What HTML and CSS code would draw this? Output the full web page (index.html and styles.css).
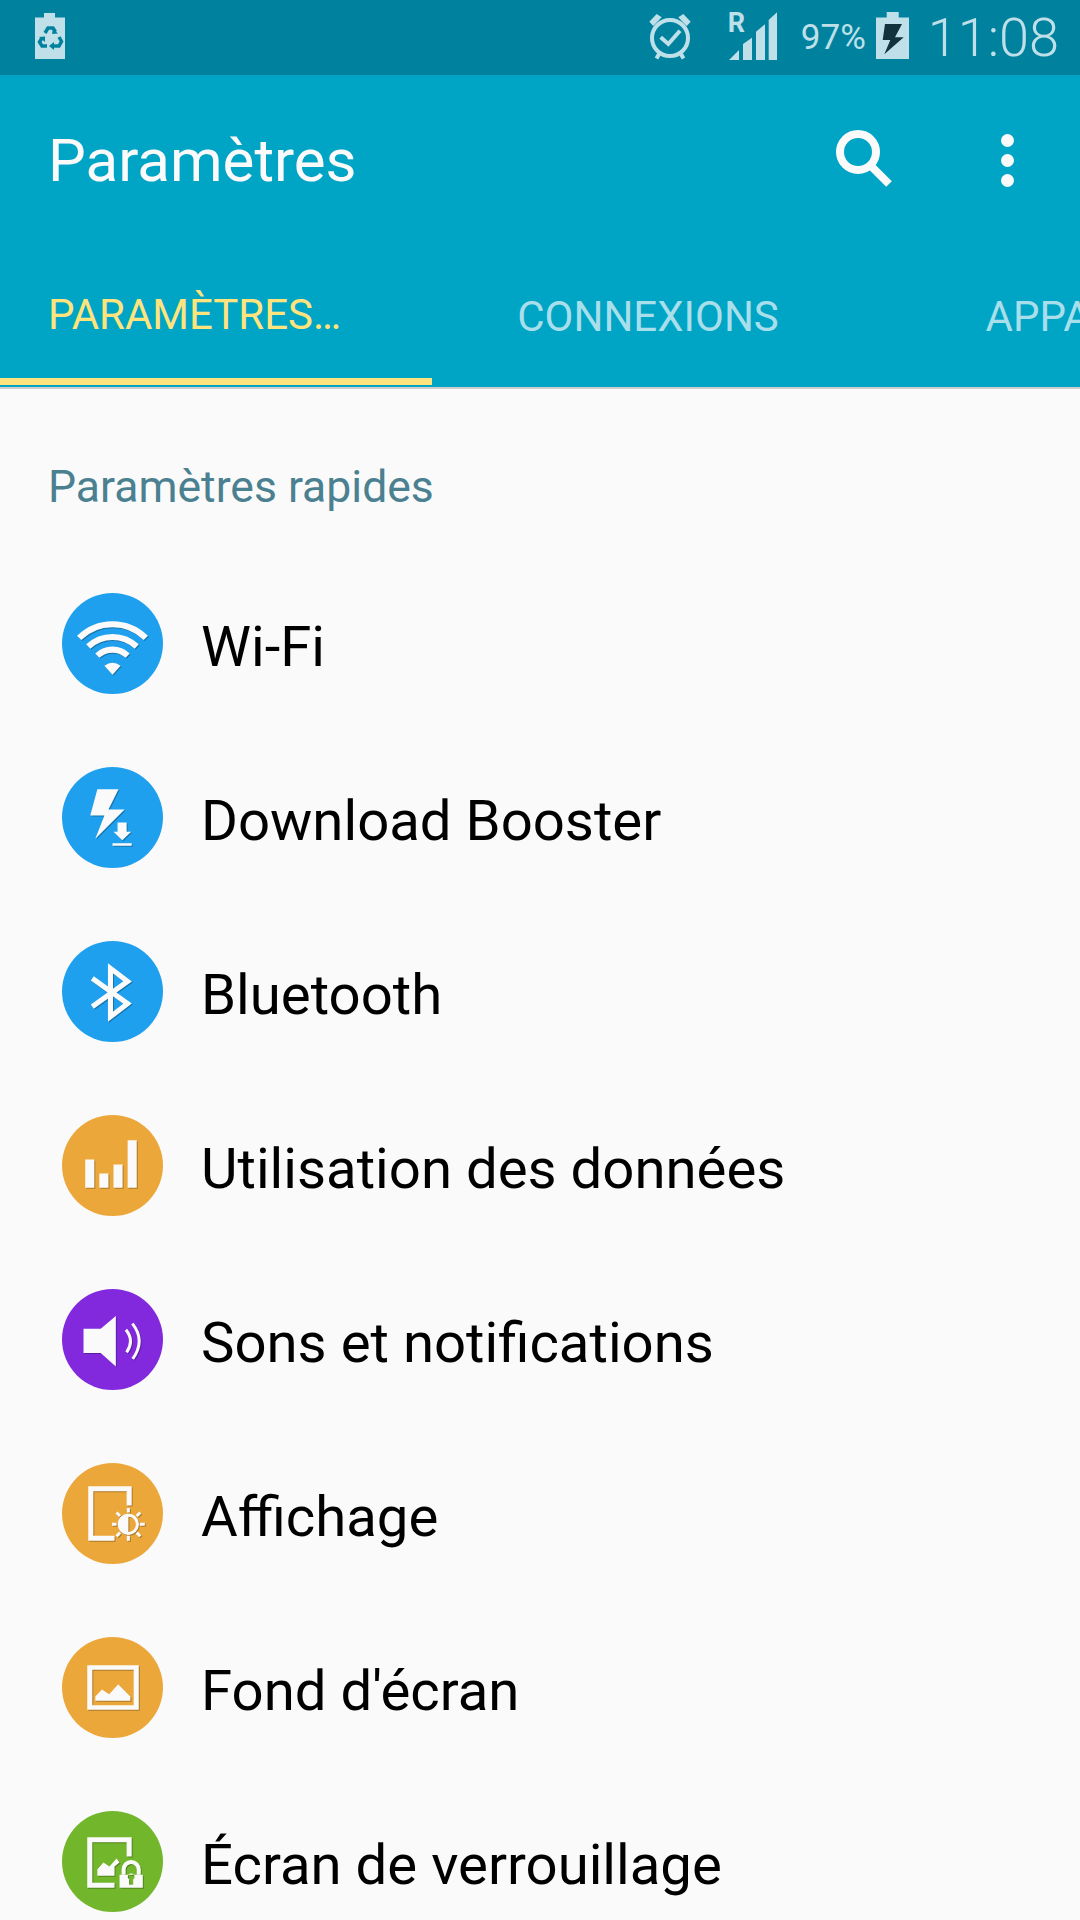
FILE: index.html
```html
<!DOCTYPE html>
<html lang="fr">

<head>
    <meta charset="utf-8">
    <title>Paramètres</title>
    <link rel="stylesheet" href="styles.css">
</head>

<body>
    <div class="status-bar">
        <svg class="recycle-battery" width="30" height="47" viewBox="0 0 30 47">
            <path class="status-fill" d="M9 0H20V4.500H30V46H0V4.500H9Z" />
            <g class="recycle-arrows">
                <path d="M10 20L13 15H18L20.500 19" />
                <path d="M7 25L4.500 29L7 33H12" />
                <path d="M18 33H24L26.500 28.500L24 24" />
            </g>
            <path class="recycle-heads" d="M18 16L23 20.500L17 21ZM4 24L10 23.500L10 29ZM19 29V37L14 33Z" />
        </svg>
        <div class="status-right">
            <svg class="alarm" width="46" height="48" viewBox="0 0 46 48">
                <circle class="status-line" cx="23" cy="25" r="18" />
                <path class="status-line" d="M13.700 24.300L21.300 31L33 17.700" />
                <path class="status-fill" d="M2.300 8.700L9.700 1L14.700 4.300L6.300 13ZM43.700 8.700L36.300 1L31.300 4.300L39.700 13Z" />
                <path class="status-line" d="M12 41L9.500 45.500M34 41L36.500 45.500" />
            </svg>
            <div class="signal">
                <span class="roaming">R</span>
                <svg width="48" height="48" viewBox="0 0 48 48">
                    <path class="status-fill" d="M0 48L10 38V48ZM14 48V32L23 25.700V48ZM27 48V19.700L36 12.300V48ZM39.700 48V8L48 0.300V48Z" />
                </svg>
            </div>
            <span class="battery-text">97%</span>
            <svg class="charging-battery" width="33" height="47" viewBox="0 0 33 47">
                <path class="status-fill" d="M10.700 0H22.700V5.500H33V47H0V5.500H10.700Z" />
                <path class="bolt-dark" d="M9 12H26L19 25.300H27.700L8.300 42.300L14.300 28H6.700Z" />
            </svg>
            <span class="clock">11:08</span>
        </div>
    </div>

    <header class="app-bar">
        <div class="toolbar">
            <h1>Paramètres</h1>
            <svg class="search-icon" width="60" height="60" viewBox="0 0 60 60">
                <circle cx="24" cy="24" r="18" />
                <path d="M36 37L55 56" />
            </svg>
            <div class="more-icon">
                <span></span>
                <span></span>
                <span></span>
            </div>
        </div>
        <div class="tabs">
            <div class="tab tab-active">PARAMÈTRES…</div>
            <div class="tab">CONNEXIONS</div>
            <div class="tab">APPAREIL</div>
        </div>
    </header>
    <div class="header-line"></div>

    <main>
        <h2>Paramètres rapides</h2>

        <div class="row">
            <div class="circle blue">
                <svg viewBox="0 0 100 100">
                    <path class="glyph-line" d="M17 44.500A47 47 0 0 1 83 44.500M26 53A35 35 0 0 1 74 53M35 62A22 22 0 0 1 65 62" />
                    <path d="M42 72Q50 66 58 72L50 81Z" />
                </svg>
            </div>
            <span>Wi-Fi</span>
        </div>

        <div class="row">
            <div class="circle blue">
                <svg viewBox="0 0 100 100">
                    <path d="M35 22H56L46 42H62L33 71L42 48H28Z" />
                    <path d="M55 55H64V64H68.500L59.700 72.500L51 64H55ZM50 75.500H69V78H50Z" />
                </svg>
            </div>
            <span>Download Booster</span>
        </div>

        <div class="row">
            <div class="circle blue">
                <svg viewBox="0 0 100 100">
                    <path class="glyph-line bluetooth" d="M30 37L65 62L48 75V27L65 40L30 65" />
                </svg>
            </div>
            <span>Bluetooth</span>
        </div>

        <div class="row">
            <div class="circle orange">
                <svg viewBox="0 0 100 100">
                    <path d="M23 44H32V72H23ZM37 58H46V72H37ZM51 49H60V72H51ZM65 25H74V72H65Z" />
                </svg>
            </div>
            <span>Utilisation des données</span>
        </div>

        <div class="row">
            <div class="circle purple">
                <svg viewBox="0 0 100 100">
                    <path d="M21.300 39.300H38.300L53.300 26.700V76.700L38.300 63.300H21.300Z" />
                    <path class="glyph-thin" d="M63.300 40.300Q72 51 64 62.700M69.700 34.300Q83 51 70 69.300" />
                </svg>
            </div>
            <span>Sons et notifications</span>
        </div>

        <div class="row">
            <div class="circle orange">
                <svg viewBox="0 0 100 100">
                    <path d="M26 23H69V42H64V28H31V72H52V77H26Z" />
                    <path class="glyph-thin" d="M65.700 44.500V49M65.700 72V77M49.500 60.700H54M77 60.700H82M54 49L57.500 52.500M74 69L77.500 72.500M54 72.500L57.500 69M74 52.500L77.500 49" />
                    <path d="M65.700 50.700A10 10 0 0 0 65.700 70.700Z" />
                    <circle class="glyph-thin" cx="65.700" cy="60.700" r="9" />
                </svg>
            </div>
            <span>Affichage</span>
        </div>

        <div class="row">
            <div class="circle orange">
                <svg viewBox="0 0 100 100">
                    <path fill-rule="evenodd" d="M25 28H76V72H25ZM30 32.500V67.500H71V32.500Z" />
                    <path d="M33 63V59L39.700 52L46.700 56.700L55.700 46.700L67.700 59V63Z" />
                </svg>
            </div>
            <span>Fond d'écran</span>
        </div>

        <div class="row">
            <div class="circle green">
                <svg viewBox="0 0 100 100">
                    <path d="M25 26H69V45H64V31H30V71H52V76H25Z" />
                    <path d="M35 64V58L41 51L47 55L54 47L57 51L52 55V64Z" />
                    <path fill-rule="evenodd" d="M57 63H80V76H57ZM68.500 62A3 3 0 0 0 66.500 67.500V73H70.500V67.500A3 3 0 0 0 68.500 62Z" />
                    <path class="glyph-thin thick" d="M61 63V58A7.500 7.500 0 0 1 76 58V63" />
                </svg>
            </div>
            <span>Écran de verrouillage</span>
        </div>
    </main>
</body>

</html>
```

FILE: styles.css
```css
* {
    box-sizing: border-box;
    margin: 0;
    padding: 0;
}

html,
body {
    height: 1920px;
    overflow: hidden;
}

body {
    background-color: #fafafa;
    font-family: Roboto, sans-serif;
}

.status-bar {
    height: 75px;
    background-color: #00829f;
    display: flex;
    align-items: flex-start;
    justify-content: space-between;
    padding: 13px 21px 0 35px;
}

.status-right {
    display: flex;
    align-items: flex-start;
}

.status-fill {
    fill: #bfe0e8;
}

.status-line {
    fill: none;
    stroke: #bfe0e8;
    stroke-width: 4;
}

.recycle-arrows {
    fill: none;
    stroke: #00829f;
    stroke-width: 3.500;
}

.recycle-heads {
    fill: #00829f;
}

.alarm {
    margin-right: 34px;
}

.signal {
    width: 50px;
    height: 48px;
    margin-top: -1px;
    margin-right: 24px;
    position: relative;
    display: flex;
    justify-content: flex-end;
}

.roaming {
    position: absolute;
    left: 1px;
    top: -5px;
    color: #bfe0e8;
    font-size: 27px;
    font-weight: 700;
}

.battery-text {
    color: #bfe0e8;
    font-size: 35px;
    line-height: 50px;
    margin-right: 10px;
}

.charging-battery {
    margin-top: -1px;
    margin-right: 19px;
}

.bolt-dark {
    fill: #12333d;
}

.clock {
    color: #bfe0e8;
    font-size: 54px;
    font-weight: 300;
    line-height: 50px;
}

.app-bar {
    background-color: #00a5c6;
}

.toolbar {
    height: 170px;
    display: flex;
    align-items: center;
    padding: 0 66px 0 48px;
}

.toolbar h1 {
    flex: 1;
    color: #fafafa;
    font-size: 60px;
    font-weight: 400;
}

.search-icon {
    fill: none;
    stroke: #fafafa;
    stroke-width: 8;
    margin-right: 107px;
    margin-bottom: 4px;
}

.more-icon {
    display: flex;
    flex-direction: column;
    gap: 7px;
}

.more-icon span {
    display: block;
    width: 13px;
    height: 13px;
    border-radius: 50%;
    background-color: #fafafa;
}

.tabs {
    height: 142px;
    display: flex;
    overflow: hidden;
    padding-bottom: 2px;
}

.tab {
    flex: 0 0 432px;
    display: flex;
    align-items: center;
    justify-content: center;
    padding-top: 9px;
    border-bottom: 7px solid transparent;
    color: #a8dfea;
    font-size: 42px;
}

.tab-active {
    justify-content: flex-start;
    padding-left: 48px;
    padding-top: 6px;
    color: #ffe47e;
    border-bottom-color: #ffe47e;
}

.header-line {
    height: 2px;
    background-color: #cfcfcf;
}

main {
    padding-top: 73px;
}

main h2 {
    color: #4a8090;
    font-size: 44.500px;
    font-weight: 400;
    line-height: 50px;
    padding-left: 48px;
    margin-bottom: 44px;
}

.row {
    height: 174px;
    display: flex;
    align-items: center;
    gap: 38px;
    padding-left: 62px;
    color: #000;
    font-size: 56.300px;
}

.row span {
    padding-top: 8px;
}

.circle {
    width: 101px;
    height: 101px;
    border-radius: 50%;
    flex-shrink: 0;
}

.circle svg {
    display: block;
    width: 101px;
    height: 101px;
    fill: #fafafa;
    filter: drop-shadow(1px 1.500px 0 rgba(0, 0, 0, 0.28));
}

.glyph-line {
    fill: none;
    stroke: #fafafa;
    stroke-width: 6;
}

.bluetooth {
    stroke-width: 5;
}

.glyph-thin {
    fill: none;
    stroke: #fafafa;
    stroke-width: 3;
}

.thick {
    stroke-width: 4;
}

.blue {
    background-color: #1fa0ee;
}

.orange {
    background-color: #eca73a;
}

.purple {
    background-color: #8229de;
}

.green {
    background-color: #72b62c;
}
```
